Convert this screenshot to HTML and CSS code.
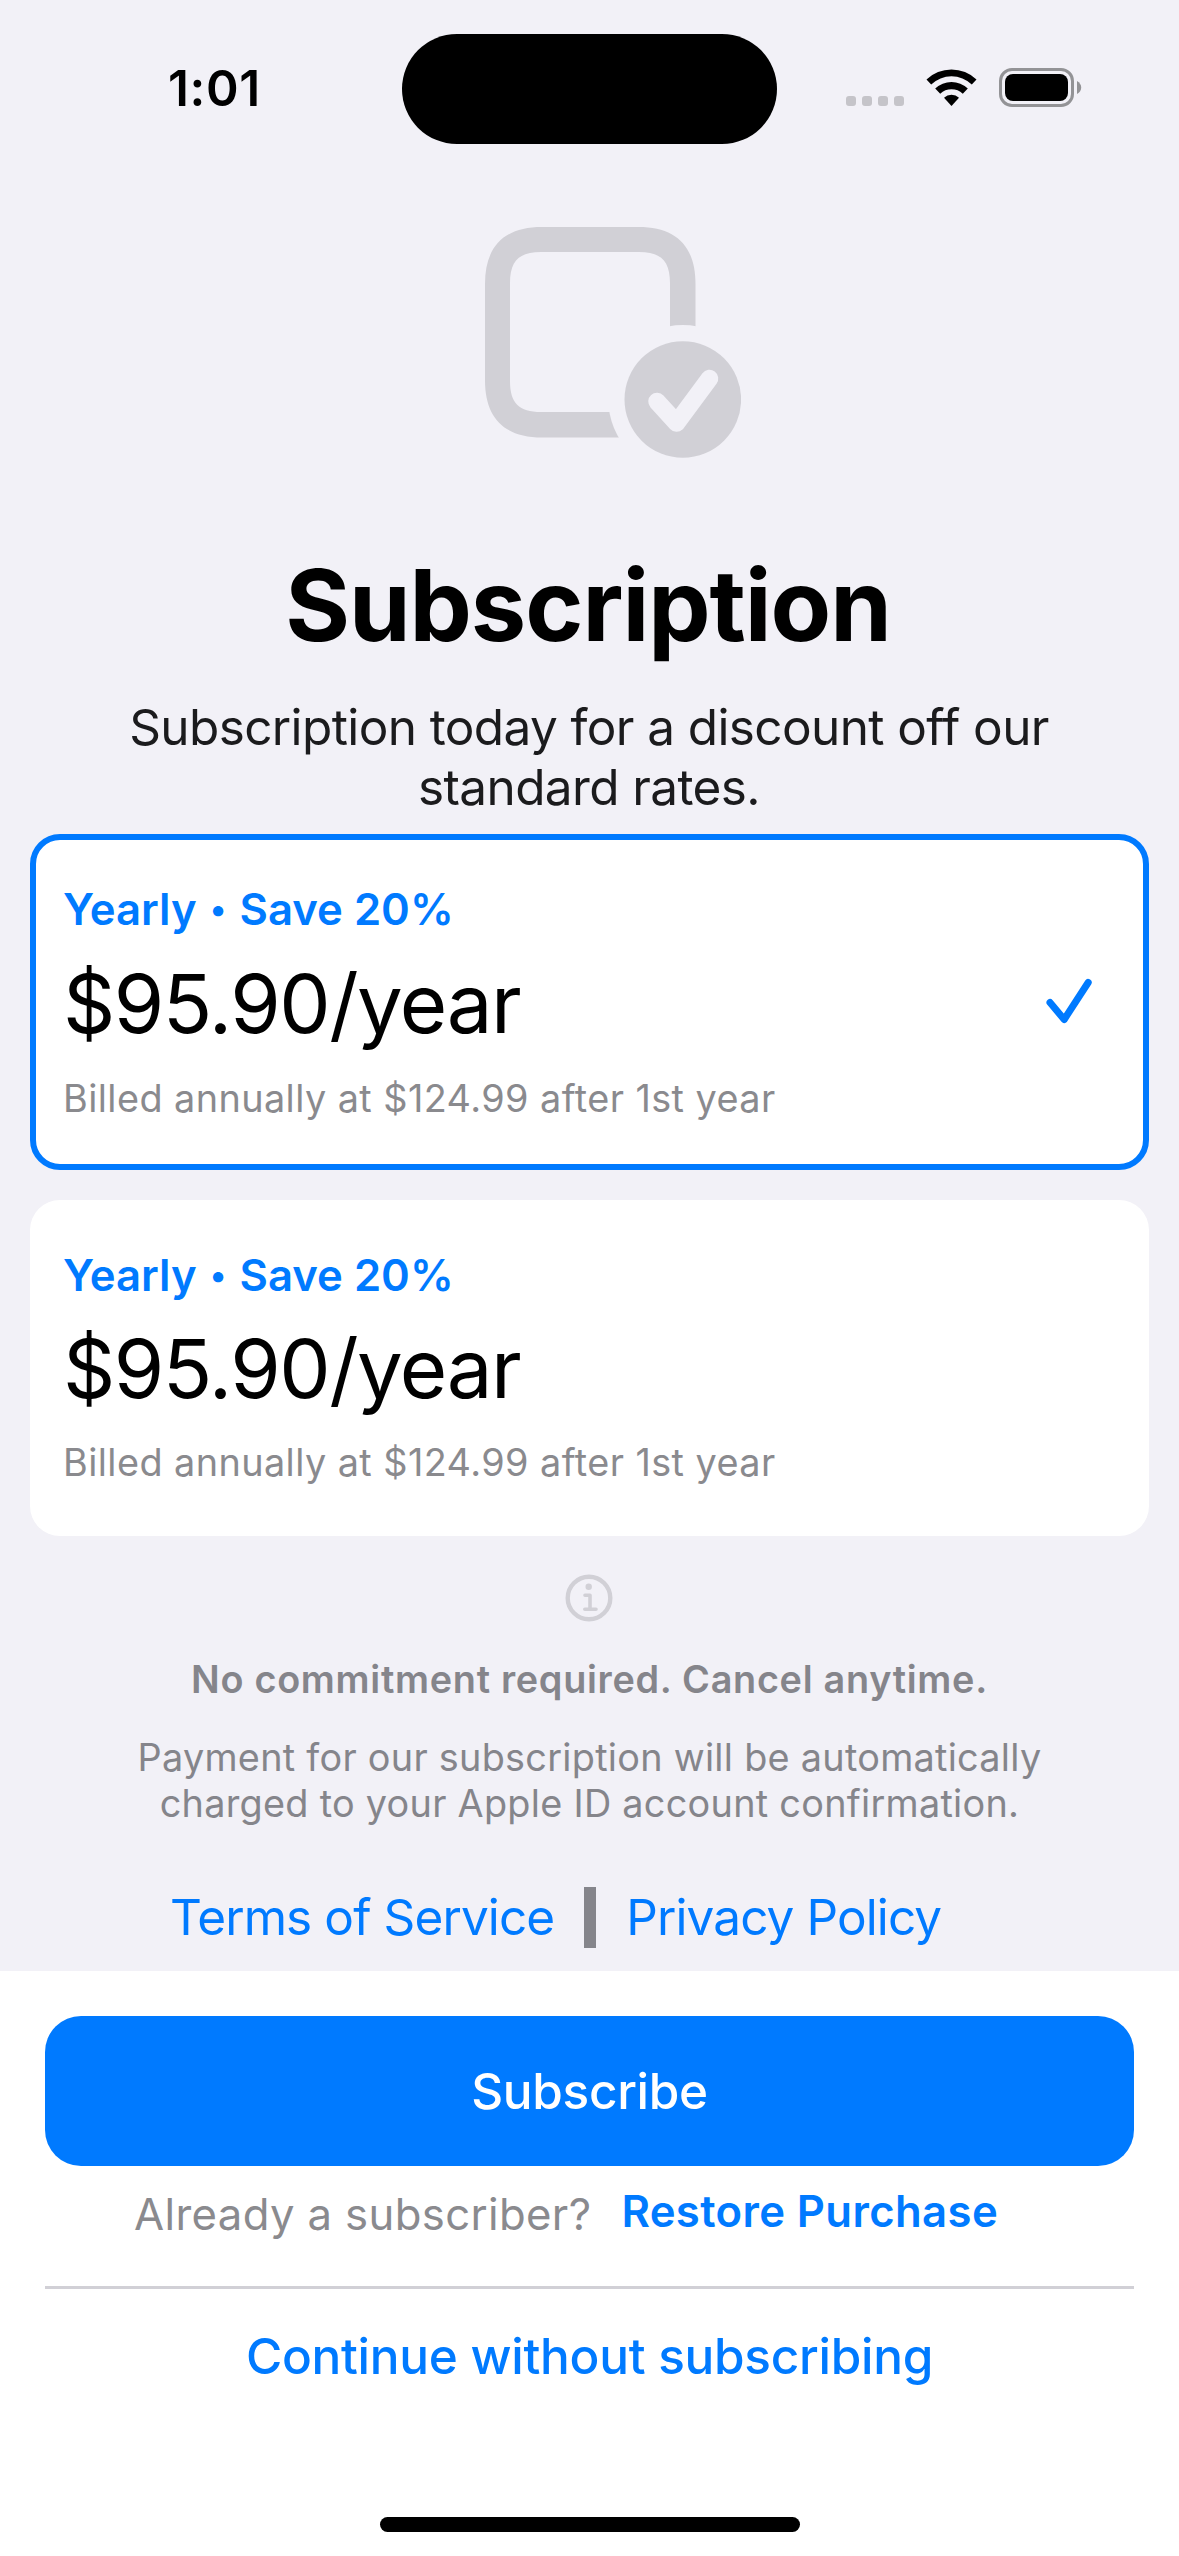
FILE: index.html
```html
<!DOCTYPE html>
<html lang="en">
<head>
<meta charset="utf-8">
<title>Subscription</title>
<link rel="stylesheet" href="styles.css">
</head>
<body>
<div class="screen">
  <header class="status">
    <span class="time">1:01</span>
    <div class="island"></div>
    <svg class="indicators" viewBox="846 60 236 56" width="236" height="56">
      <g fill="#c5c4c9">
        <rect x="846" y="96" width="10" height="10" rx="3"/>
        <rect x="862" y="96" width="10" height="10" rx="3"/>
        <rect x="878" y="96" width="10" height="10" rx="3"/>
        <rect x="894" y="96" width="10" height="10" rx="3"/>
      </g>
      <path d="M926.5 79.5A36 36 0 0 1 976.5 79.5L971.8 84.5A29.3 29.3 0 0 0 931.2 84.5Z"/>
      <path d="M935.2 88.5A23.6 23.6 0 0 1 967.8 88.5L962.8 93.7A16.6 16.6 0 0 0 940.2 93.7Z"/>
      <path d="M944 97.8A10.8 10.8 0 0 1 959 97.8L951.5 106Z"/>
      <rect x="1000.5" y="69.5" width="72" height="36" rx="11.5" fill="none" stroke="#939396" stroke-width="3"/>
      <rect x="1005" y="74" width="63" height="27" rx="8"/>
      <path d="M1077 81Q1081.2 83.5 1081.2 87.5Q1081.2 91.5 1077 94Z" fill="#939396"/>
    </svg>
  </header>

  <main class="content">
    <svg class="hero" viewBox="438 227 303 232" width="303" height="232">
      <defs>
        <mask id="notch">
          <rect x="438" y="227" width="303" height="232" fill="#fff"/>
          <circle cx="682.8" cy="399.5" r="74.5" fill="#000"/>
        </mask>
      </defs>
      <path mask="url(#notch)" fill="#d1d0d6" fill-rule="evenodd" d="M542 227H638.5C676 227 695.5 246 695.5 284V380.500C695.500 418 676 437.500 638.500 437.500H542C504.500 437.500 485 418 485 380.500V284C485 246 504.500 227 542 227ZM541 252C519 252 510 261 510 283V381C510 403 519 412 541 412H639C661 412 670 403 670 381V283C670 261 661 252 639 252Z"/>
      <circle cx="682.8" cy="399.5" r="58.300" fill="#d1d0d6"/>
      <path d="M657 401.500L676.600 423L709.500 378.500" fill="none" stroke="#f2f1f7" stroke-width="17.500" stroke-linecap="round" stroke-linejoin="round"/>
    </svg>

    <h1 class="title">Subscription</h1>
    <p class="lead">Subscription today for a discount off our<br>standard rates.</p>

    <section class="plans">
      <article class="plan plan--selected">
        <div class="plan-name">Yearly <span class="dot">•</span> Save 20%</div>
        <div class="plan-price"><span>$95.90/year</span>
          <svg class="check" viewBox="0 0 46 46" width="46" height="46">
            <path d="M4 24.500L18.200 41.500L42.200 4.500" fill="none" stroke="#007aff" stroke-width="7" stroke-linecap="round" stroke-linejoin="round"/>
          </svg>
        </div>
        <div class="plan-note">Billed annually at $124.99 after 1st year</div>
      </article>
      <article class="plan">
        <div class="plan-name">Yearly <span class="dot">•</span> Save 20%</div>
        <div class="plan-price"><span>$95.90/year</span></div>
        <div class="plan-note">Billed annually at $124.99 after 1st year</div>
      </article>
    </section>

    <svg class="info" viewBox="0 0 48 48" width="48" height="48">
      <circle cx="24" cy="24" r="21.300" fill="none" stroke="#d1d0d6" stroke-width="4.400"/>
      <circle cx="23.700" cy="12.800" r="3.200" fill="#d1d0d6"/>
      <path d="M20 21.300H25V35M19.800 35.300H31" fill="none" stroke="#d1d0d6" stroke-width="3.600" stroke-linecap="round" stroke-linejoin="round"/>
    </svg>
    <p class="promise">No commitment required. Cancel anytime.</p>
    <p class="terms">Payment for our subscription will be automatically<br>charged to your Apple ID account confirmation.</p>
    <nav class="links">
      <a>Terms of Service</a>
      <span class="bar"></span>
      <a>Privacy Policy</a>
    </nav>
  </main>

  <footer class="actions">
    <button class="subscribe">Subscribe</button>
    <div class="restore">
      <span class="question">Already a subscriber?</span>
      <a class="restore-link">Restore Purchase</a>
    </div>
    <hr class="rule">
    <a class="skip">Continue without subscribing</a>
    <div class="home"></div>
  </footer>
</div>
</body>
</html>
```
FILE: styles.css
```css
* {
  box-sizing: border-box;
  margin: 0;
  padding: 0;
}

body {
  font-family: Inter, "Liberation Sans", sans-serif;
  background: #f2f1f7;
  color: #000;
}

.screen {
  display: flex;
  flex-direction: column;
  width: 1179px;
  height: 2556px;
  overflow: hidden;
}

/* Status bar */
.status {
  display: grid;
  grid-template-columns: 402px 375px 1fr;
  height: 177px;
  padding-top: 34px;
}

.time {
  padding: 24px 0 0 168px;
  font-size: 49.5px;
  line-height: 60px;
  font-weight: 600;
  letter-spacing: 0.6px;
}

.island {
  height: 110px;
  border-radius: 55px;
  background: #000;
}

.indicators {
  margin: 26px 0 0 69px;
}

/* Content */
.content {
  display: flex;
  flex-direction: column;
  align-items: center;
  height: 1794px;
  padding-top: 50px;
  text-align: center;
}

.title {
  margin-top: 86px;
  padding-right: 3px;
  font-size: 99px;
  line-height: 120px;
  font-weight: 700;
  letter-spacing: -1.05px;
}

.lead {
  margin-top: 32px;
  padding-right: 1px;
  font-size: 49.5px;
  line-height: 60px;
  letter-spacing: -0.61px;
  color: #1b1b1d;
}

.plans {
  display: flex;
  flex-direction: column;
  gap: 30px;
  width: 1119px;
  margin-top: 17px;
  text-align: left;
}

.plan {
  height: 336px;
  padding: 43px 51px 0 27px;
  border: 6px solid transparent;
  border-radius: 30px;
  background: #fff;
  background-clip: border-box;
}

.plan--selected {
  border-color: #007aff;
}

.plan-name {
  height: 54px;
  font-size: 43.65px;
  line-height: 54px;
  font-weight: 600;
  letter-spacing: 0;
  color: #007aff;
}

.dot {
  display: inline-block;
  width: 21px;
  font-size: 33px;
  line-height: 36px;
  text-align: center;
  vertical-align: 4px;
}

.plan-price {
  display: flex;
  justify-content: space-between;
  align-items: center;
  margin: 16px 0 20px;
  font-size: 81.5px;
  line-height: 100px;
  letter-spacing: -1.48px;
}

.plan--selected .plan-price {
  line-height: 102px;
}

.check {
  margin-bottom: 7px;
}

.plan-note {
  font-size: 37.8px;
  line-height: 46px;
  letter-spacing: 0.43px;
  color: #8a8a8e;
}

.info {
  margin: 38px 1px 0 0;
}

.promise {
  margin-top: 34px;
  font-size: 37.8px;
  line-height: 46px;
  font-weight: 600;
  letter-spacing: 0.71px;
  color: #85858b;
}

.terms {
  margin-top: 32px;
  font-size: 37.8px;
  line-height: 46px;
  letter-spacing: 0.28px;
  color: #85858b;
}

.links {
  display: flex;
  align-self: flex-start;
  gap: 30px;
  margin: 61px 0 0 170px;
  font-size: 49.5px;
  line-height: 61px;
  letter-spacing: -0.9px;
  color: #007aff;
}

.bar {
  width: 12px;
  height: 61px;
  background: #85858b;
}

/* Bottom sheet */
.actions {
  display: flex;
  flex-direction: column;
  align-items: center;
  height: 585px;
  padding: 45px 45px 0;
  background: #fff;
}

.subscribe {
  width: 100%;
  height: 150px;
  border: 0;
  border-radius: 36px;
  background: #007aff;
  color: #fff;
  font-family: inherit;
  font-size: 49.5px;
  font-weight: 500;
  letter-spacing: -0.32px;
}

.restore {
  display: flex;
  align-self: flex-start;
  gap: 30px;
  margin: 19px 0 0 89px;
  font-size: 43.65px;
  line-height: 54px;
  letter-spacing: 0.38px;
}

.question {
  padding-top: 3px;
  color: #8a8a8e;
}

.restore-link {
  font-weight: 600;
  color: #007aff;
}

.rule {
  width: 100%;
  height: 3px;
  margin-top: 44px;
  border: 0;
  background: #d1d0d6;
}

.skip {
  margin-top: 37px;
  font-size: 49.5px;
  line-height: 60px;
  font-weight: 500;
  letter-spacing: -0.28px;
  color: #007aff;
}

.home {
  width: 420px;
  height: 15px;
  margin-top: 131px;
  border-radius: 8px;
  background: #000;
}
```
